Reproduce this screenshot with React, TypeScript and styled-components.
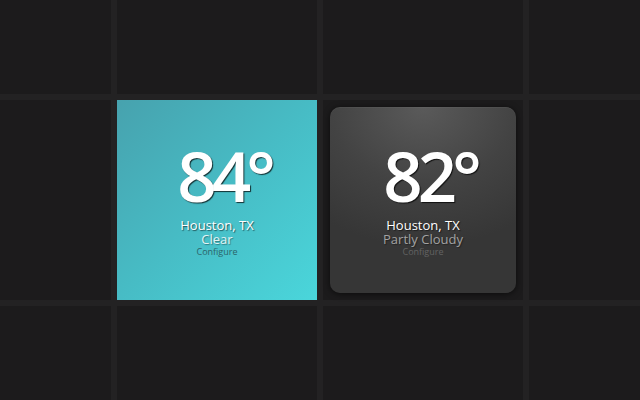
import React from "react";
import styled, { createGlobalStyle } from "styled-components";

type Tile = {
  id: number;
  kind?: "teal" | "dark";
  temp?: number;
  city?: string;
  sky?: string;
};

const tiles: Tile[] = [
  { id: 1 }, { id: 2 }, { id: 3 }, { id: 4 },
  { id: 5 },
  { id: 6, kind: "teal", temp: 84, city: "Houston, TX", sky: "Clear" },
  { id: 7, kind: "dark", temp: 82, city: "Houston, TX", sky: "Partly Cloudy" },
  { id: 8 },
  { id: 9 }, { id: 10 }, { id: 11 }, { id: 12 },
];

export default function App() {
  return (
    <>
      <GlobalStyle />
      <Stage>
        <Grid>
          {tiles.map((t) =>
            t.kind === "teal" ? (
              <TealTile key={t.id}>
                <Weather temp={t.temp!} city={t.city!} sky={t.sky!} tone="teal" />
              </TealTile>
            ) : t.kind === "dark" ? (
              <Cell key={t.id}>
                <DarkCard>
                  <Weather temp={t.temp!} city={t.city!} sky={t.sky!} tone="dark" />
                </DarkCard>
              </Cell>
            ) : (
              <Cell key={t.id} />
            )
          )}
        </Grid>
      </Stage>
    </>
  );
}

function Weather({ temp, city, sky, tone }: { temp: number; city: string; sky: string; tone: "teal" | "dark" }) {
  return (
    <Info>
      <Temp>{temp}°</Temp>
      <City>{city}</City>
      <Sky $tone={tone}>{sky}</Sky>
      <Configure $tone={tone}>Configure</Configure>
    </Info>
  );
}

const GlobalStyle = createGlobalStyle`
  html, body {
    margin: 0;
    padding: 0;
    background: #232223;
    overflow: hidden;
  }
  body {
    font-family: "Open Sans", "DejaVu Sans", sans-serif;
  }
`;

const Stage = styled.div`
  width: 100vw;
  height: 100vh;
  display: flex;
  justify-content: center;
  align-items: center;
  overflow: hidden;
`;

const Grid = styled.div`
  flex: none;
  display: grid;
  grid-template-columns: repeat(4, 200px);
  grid-template-rows: repeat(3, 200px);
  gap: 6px;
`;

const Cell = styled.div`
  background: #1c1b1c;
  padding: 7px;
  display: flex;
`;

const TealTile = styled.div`
  background: linear-gradient(135deg, #47a2ae 0%, #47bcc5 50%, #4ad6db 100%);
  display: flex;
`;

const DarkCard = styled.div`
  flex: 1;
  display: flex;
  border-radius: 10px;
  background: radial-gradient(ellipse 90% 75% at 50% 0%, #5a5a5a 0%, #434343 55%, #363636 100%);
  box-shadow: 0 1px 6px rgba(0, 0, 0, 0.6), inset 0 1px 0 rgba(255, 255, 255, 0.04);
`;

const Info = styled.div`
  flex: 1;
  display: flex;
  flex-direction: column;
  align-items: center;
  justify-content: center;
  padding-bottom: 2px;
`;

const Temp = styled.div`
  font-size: 69px;
  font-weight: 600;
  line-height: 70px;
  letter-spacing: -5px;
  color: #fff;
  text-shadow: 1px 1px 1px rgba(0, 0, 0, 0.75);
  margin-bottom: 8px;
  padding-left: 14px;
`;

const City = styled.div`
  font-size: 13px;
  line-height: 14px;
  color: #fff;
  text-shadow: 1px 1px 1px rgba(0, 0, 0, 0.55);
`;

const Sky = styled.div<{ $tone: "teal" | "dark" }>`
  font-size: 13px;
  line-height: 14px;
  color: ${(p) => (p.$tone === "teal" ? "#e2f4f5" : "#a2a2a2")};
  text-shadow: 1px 1px 1px rgba(0, 0, 0, 0.35);
`;

const Configure = styled.div<{ $tone: "teal" | "dark" }>`
  font-size: 9px;
  line-height: 12px;
  color: ${(p) => (p.$tone === "teal" ? "#2b6469" : "#636363")};
`;
